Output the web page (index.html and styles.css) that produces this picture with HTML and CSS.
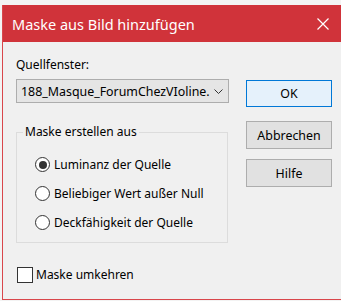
FILE: index.html
```html
<!DOCTYPE html>
<html>
<head>
    <title>Maske aus Bild hinzufügen</title>
    <link rel="stylesheet" href="styles.css">
</head>
<body>
    <div class="window">
        <div class="titlebar">
            <span class="title">Maske aus Bild hinzufügen</span>
            <span class="close">
                <svg width="12" height="12" viewBox="0 0 12 12"><path d="M0.5 0.5 L11.5 11.5 M11.5 0.5 L0.5 11.5" stroke="#fff" stroke-width="1.2" fill="none"/></svg>
            </span>
        </div>

        <div class="content">
            <div class="left-col">
                <div class="field-label">Quellfenster:</div>
                <div class="select">
                    <span class="select-text">188_Masque_ForumChezVIoline.</span>
                    <svg class="chevron" width="9" height="5" viewBox="0 0 9 5"><path d="M0.5 0.5 L4.5 4.5 L8.5 0.5" stroke="#333" stroke-width="1" fill="none"/></svg>
                </div>

                <fieldset class="group">
                    <legend>Maske erstellen aus</legend>
                    <div class="radio-row"><span class="radio checked"></span>Luminanz der Quelle</div>
                    <div class="radio-row"><span class="radio"></span>Beliebiger Wert außer Null</div>
                    <div class="radio-row"><span class="radio"></span>Deckfähigkeit der Quelle</div>
                </fieldset>

                <div class="check-row"><span class="checkbox"></span>Maske umkehren</div>
            </div>

            <div class="right-col">
                <button class="btn btn-default">OK</button>
                <button class="btn btn-cancel">Abbrechen</button>
                <button class="btn btn-help">Hilfe</button>
            </div>
        </div>
    </div>
</body>
</html>
```

FILE: styles.css
```css
body {
    margin: 0;
    padding: 5px 0 0 2px;
    background-color: #f3f3f3;
    font-family: "Noto Sans", "Open Sans", sans-serif;
    font-size: 12px;
    color: #000;
}
.window {
    background-color: #f0f0f0;
    border-left: 1px solid #d9464b;
    border-bottom: 1px solid #d9464b;
    box-sizing: border-box;
    height: 295px;
}
.titlebar {
    height: 37px;
    background-color: #d0333a;
    color: #fff;
    display: flex;
    align-items: center;
    justify-content: space-between;
    padding: 0 12px 0 9px;
}
.title {
    font-size: 14.5px;
    margin-top: 1px;
}
.close {
    display: flex;
    margin-top: 1px;
}
.content {
    display: flex;
    padding: 15px 0 0 13px;
}
.left-col {
    width: 213px;
}
.field-label {
    line-height: 16px;
}
.select {
    margin-top: 6px;
    height: 24px;
    box-sizing: border-box;
    border: 1px solid #adadad;
    background-color: #e5e5e5;
    display: flex;
    align-items: center;
    justify-content: space-between;
    padding: 0 5px 0 4px;
}
.select-text {
    white-space: nowrap;
    overflow: hidden;
    font-size: 12.4px;
}
.group {
    margin: 21px 0 0 0;
    width: 212px;
    box-sizing: border-box;
    height: 119px;
    border: 1px solid #dcdcdc;
    padding: 10px 0 0 18px;
}
.group legend {
    padding: 0 2px;
    margin-left: -12px;
    line-height: 16px;
}
.radio-row {
    display: flex;
    align-items: center;
    height: 29px;
}
.radio {
    width: 15px;
    height: 15px;
    box-sizing: border-box;
    border: 1px solid #333;
    border-radius: 50%;
    background-color: #fff;
    margin-right: 4px;
    display: flex;
    align-items: center;
    justify-content: center;
}
.radio.checked::after {
    content: "";
    width: 8px;
    height: 8px;
    border-radius: 50%;
    background-color: #333;
}
.check-row {
    display: flex;
    align-items: center;
    margin-top: 23px;
    margin-left: 1px;
}
.checkbox {
    width: 16px;
    height: 16px;
    box-sizing: border-box;
    border: 1px solid #333;
    background-color: #fff;
    margin-right: 3px;
}
.right-col {
    margin-left: 17px;
    padding-top: 23px;
    display: flex;
    flex-direction: column;
}
button {
    font-family: inherit;
    font-size: 12.4px;
    width: 86px;
    height: 27px;
    border: 1px solid #adadad;
    background-color: #e1e1e1;
    color: #000;
    padding: 0;
}
.btn-default {
    border-color: #0078d7;
    background-color: #e5f1fb;
}
.btn-cancel {
    margin-top: 14px;
    height: 28px;
}
.btn-help {
    margin-top: 10px;
    height: 28px;
}
```
